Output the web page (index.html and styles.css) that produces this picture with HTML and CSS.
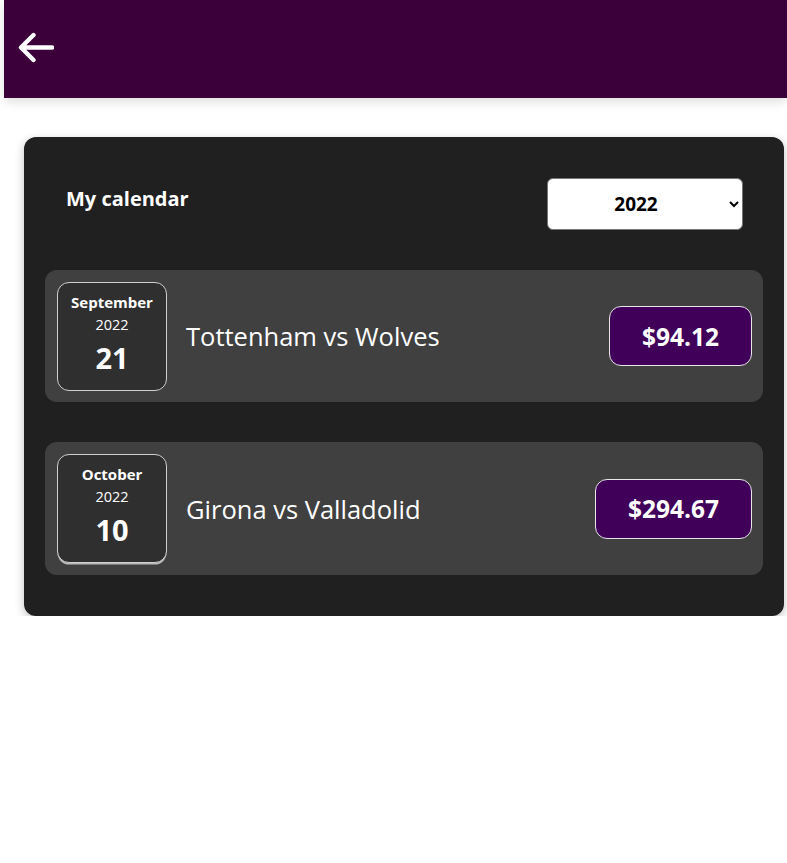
FILE: index.html
```html
<!DOCTYPE html>
<html>
<head>
<meta charset="utf-8">
<link rel="stylesheet" href="styles.css">
</head>
<body>
<header class="topbar">
  <button class="back" aria-label="Back">
    <svg width="36" height="32" viewBox="0 0 36 32"><path d="M34 15.5H3.5M15.5 3L3 15.5L15.5 28" fill="none" stroke="#fff" stroke-width="4.4" stroke-linecap="round" stroke-linejoin="round"/></svg>
  </button>
</header>
<main class="card">
  <div class="card-head">
    <h2 class="title">My calendar</h2>
    <select class="year"><option>2022</option></select>
  </div>
  <div class="events">
    <div class="event">
      <div class="date">
        <div class="month">September</div>
        <div class="yr">2022</div>
        <div class="day">21</div>
      </div>
      <div class="name">Tottenham vs Wolves</div>
      <button class="price">$94.12</button>
    </div>
    <div class="event">
      <div class="date date-shadow">
        <div class="month">October</div>
        <div class="yr">2022</div>
        <div class="day">10</div>
      </div>
      <div class="name">Girona vs Valladolid</div>
      <button class="price">$294.67</button>
    </div>
  </div>
</main>
</body>
</html>
```

FILE: styles.css
```css
* { box-sizing: border-box; }
html, body { margin: 0; padding: 0; background: #fff; }
body { font-family: "Open Sans", "Noto Sans", sans-serif; color: #fff; }

.topbar {
  margin-left: 4px;
  height: 98px;
  background: #3b003a;
  display: flex;
  align-items: center;
  padding-left: 14px;
  box-shadow: 0 4px 10px rgba(0,0,0,0.12);
}
.back {
  background: none; border: 0; padding: 0; margin: 0;
  display: flex; margin-top: -2px;
}

.card {
  margin: 39px 3px 0 24px;
  background: #202020;
  border-radius: 12px;
  padding: 41px 21px 41px 21px;
  box-shadow: 0 3px 10px rgba(0,0,0,0.25);
}
.card-head {
  display: flex;
  justify-content: space-between;
  align-items: flex-start;
  padding: 0 20px 0 21px;
}
.title {
  margin: 7px 0 0 0;
  font-size: 20px;
  font-weight: 700;
  line-height: 28px;
}
.year {
  width: 196px;
  height: 52px;
  border-radius: 6px;
  border: 1px solid #767676;
  background: #fff;
  color: #000;
  font-family: "Open Sans", sans-serif;
  font-size: 19px;
  font-weight: 700;
  text-align: center;
  text-align-last: center;
  padding: 0 6px 0 0;
}

.events {
  margin-top: 40px;
  display: flex;
  flex-direction: column;
  gap: 40px;
}
.event {
  background: #404040;
  border-radius: 12px;
  height: 132px;
  display: flex;
  align-items: center;
  padding: 0 11px 0 12px;
}
.event + .event { height: 133px; }
.date {
  width: 110px;
  height: 109px;
  border: 1.5px solid #cfcfcf;
  border-radius: 12px;
  background: #2f2f2f;
  display: flex;
  flex-direction: column;
  align-items: center;
  padding-top: 9px;
}
.date-shadow { box-shadow: 0 2px 0 -0.5px #bbb; }
.month { font-size: 15px; font-weight: 700; line-height: 20px; }
.yr { font-size: 14.5px; line-height: 20px; margin-top: 3px; }
.day { font-size: 29px; font-weight: 700; line-height: 36px; margin-top: 5px; }
.name {
  flex: 1;
  margin-left: 19px;
  font-size: 25.5px;
  line-height: 32px;
}
.price {
  height: 60px;
  padding: 0 32px;
  background: #40005a;
  border: 1px solid #e8e8e8;
  border-radius: 12px;
  color: #fff;
  font-family: "Open Sans", sans-serif;
  font-size: 24.5px;
  font-weight: 700;
}
```
